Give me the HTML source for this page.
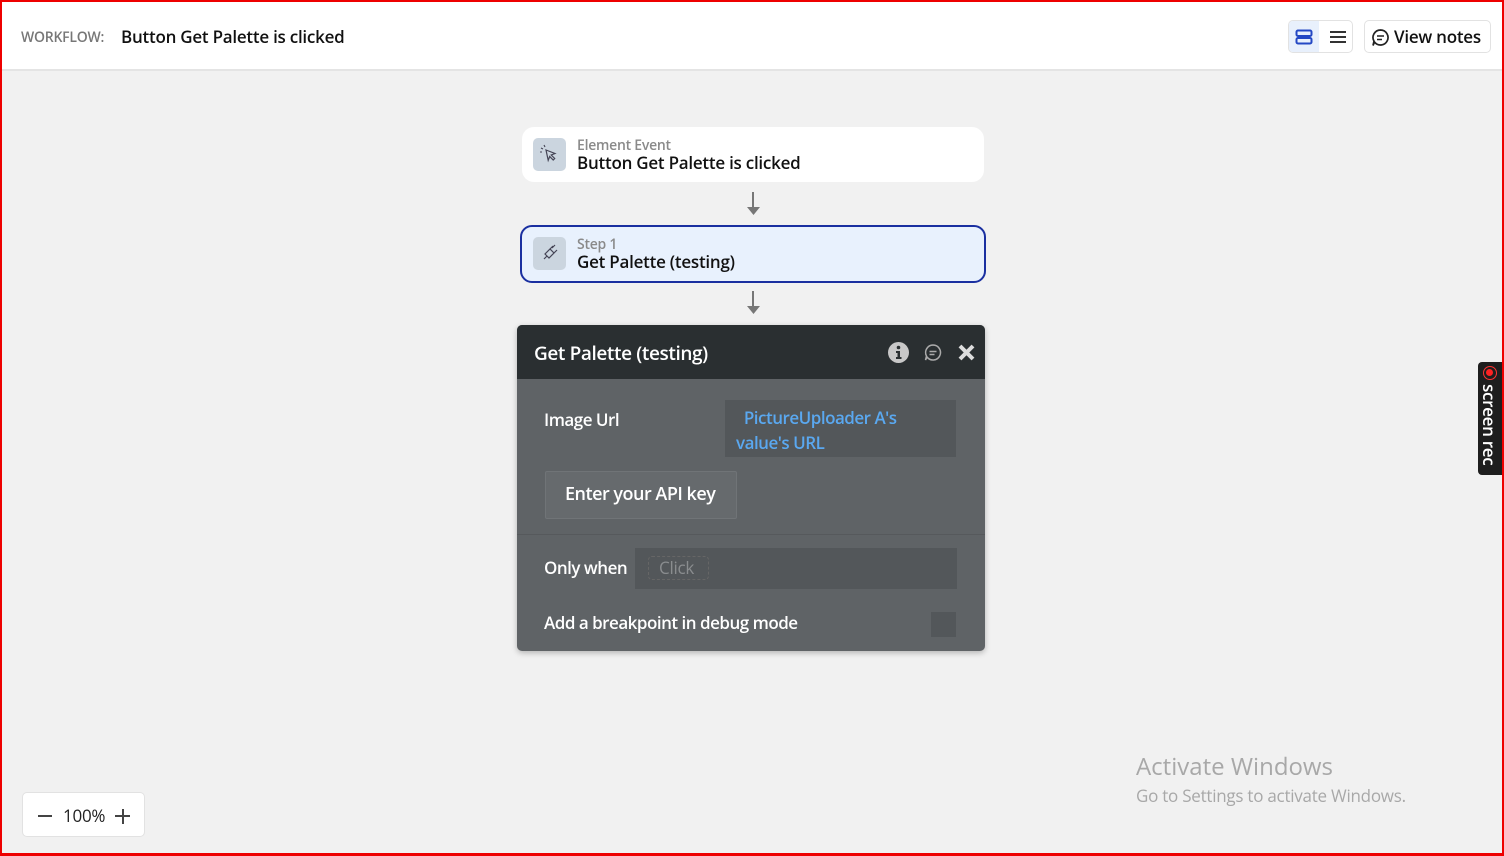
<!DOCTYPE html>
<html><head><style>
*{box-sizing:border-box;margin:0;padding:0}
body{width:1504px;height:856px;overflow:hidden;background:#f1f1f1;font-family:"Open Sans","Liberation Sans",sans-serif;position:relative;letter-spacing:-0.25px}
.frame{position:absolute;inset:0;border:2px solid #e00;border-bottom-width:3px;pointer-events:none;z-index:10}
.top{position:absolute;left:0;top:0;width:1504px;height:71px;background:#fff;border-bottom:2px solid #e4e4e4}
.abs{position:absolute;white-space:nowrap}
.card{position:absolute;left:522px;width:462px;background:#fff;border-radius:12px}
.ic{position:absolute;left:11px;top:11px;width:33px;height:33px;background:#cbd5df;border-radius:5px}
.small{position:absolute;left:55px;font-size:14px;color:#8a8a8a;font-weight:600}
.big{position:absolute;left:55px;font-size:17px;color:#111;font-weight:600}
.arrow{position:absolute;left:752px;width:2px;background:#777}
.panel{position:absolute;left:517px;top:325px;width:468px;height:326px;background:#5f6366;border-radius:5px;box-shadow:0 2px 6px rgba(0,0,0,.25);overflow:hidden}
.ph{height:54px;background:#2a2f31;color:#fff;font-size:19px;padding:15px 17px;font-weight:600;letter-spacing:-0.4px}
.wt{position:absolute;color:#fff;font-size:17px;white-space:nowrap;font-weight:600;letter-spacing:-0.5px}
</style></head><body>
<div class="top">
<div class="abs" style="left:21px;top:28px;font-size:14px;color:#777;font-weight:600">WORKFLOW:</div>
<div class="abs" style="left:121px;top:25px;font-size:17px;color:#111;font-weight:600">Button Get Palette is clicked</div>
<div class="abs" style="left:1288px;top:20px;width:65px;height:33px;border:1px solid #e2e2e2;border-radius:5px;overflow:hidden">
<div class="abs" style="left:0;top:0;width:30px;height:33px;background:#e8f0fc"></div>
<svg class="abs" style="left:6px;top:8px" width="18" height="16"><rect x="1.5" y="1.5" width="15" height="5.5" rx="1.5" fill="none" stroke="#2448c4" stroke-width="2"/><rect x="1.5" y="9" width="15" height="5.5" rx="1.5" fill="none" stroke="#2448c4" stroke-width="2"/></svg>
<svg class="abs" style="left:40px;top:9px" width="18" height="14"><path d="M1 2h16M1 7h16M1 12h16" stroke="#333" stroke-width="2"/></svg>
</div>
<div class="abs" style="left:1364px;top:20px;width:127px;height:33px;border:1px solid #e2e2e2;border-radius:5px">
<svg class="abs" style="left:6px;top:7px" width="19" height="19"><path d="M9.5 2a7.5 7.5 0 1 1-6 12L2 17.5l1-4.3A7.5 7.5 0 0 1 9.5 2z" fill="none" stroke="#222" stroke-width="1.7"/><path d="M6 8h7M6 11.5h5" stroke="#222" stroke-width="1.5"/></svg>
<div class="abs" style="left:29px;top:4px;font-size:17px;color:#111;font-weight:600">View notes</div>
</div>
</div>

<div class="card" style="top:127px;height:55px">
<div class="ic"><svg width="33" height="33"><path d="M13 12l9 3.5-3.8 1.5 3.5 3.5-1.5 1.5-3.5-3.5-1.5 3.8z" fill="none" stroke="#445" stroke-width="1.2"/><path d="M10 11l-2-1M12 9l-1-2M9 14H7" stroke="#445" stroke-width="1.1"/></svg></div>
<div class="small" style="top:9px">Element Event</div>
<div class="big" style="top:24px">Button Get Palette is clicked</div>
</div>
<div class="arrow" style="top:192px;height:20px"></div>
<svg class="abs" style="left:747px;top:207px" width="13" height="9"><path d="M0 0h13L6.5 8z" fill="#777"/></svg>

<div class="card" style="top:225px;height:58px;left:520px;width:466px;background:#e8f1fd;border:2px solid #1a2fa0">
<div class="ic" style="left:11px;top:10px"><svg width="33" height="33"><path d="M11 22l3-3M19 11l3-3M14 19l-2-2 5-5 4 4-5 5z M17 12l3-3M21 16l3-3" fill="none" stroke="#445" stroke-width="1.2"/></svg></div>
<div class="small" style="top:8px">Step 1</div>
<div class="big" style="top:23px">Get Palette (testing)</div>
</div>
<div class="arrow" style="top:291px;height:20px"></div>
<svg class="abs" style="left:747px;top:306px" width="13" height="9"><path d="M0 0h13L6.5 8z" fill="#777"/></svg>

<div class="panel">
<div class="ph">Get Palette (testing)</div>
<svg class="abs" style="left:371px;top:17px" width="21" height="21"><circle cx="10.5" cy="10.5" r="10.5" fill="#c8c8c8"/><circle cx="10.5" cy="5.5" r="1.8" fill="#2a2f31"/><path d="M8 9h4v6h1.5v2h-5.5v-2h1.5v-4H8z" fill="#2a2f31"/></svg>
<svg class="abs" style="left:406px;top:18px" width="20" height="19"><path d="M10 2a7.5 7.5 0 1 1-6 12L2.5 17l1-4A7.5 7.5 0 0 1 10 2z" fill="none" stroke="#aaa" stroke-width="1.5"/><path d="M6.5 8.5h7M6.5 11.5h5" stroke="#aaa" stroke-width="1.4"/></svg>
<svg class="abs" style="left:441px;top:19px" width="17" height="17"><path d="M2 2l13 13M15 2L2 15" stroke="#ddd" stroke-width="4"/></svg>
<div class="wt" style="left:27px;top:83px">Image Url</div>
<div class="abs" style="left:208px;top:75px;width:231px;height:57px;background:#53575a;color:#5aa8f0;font-size:17px;line-height:25px;padding:5px 11px 0;white-space:normal;font-weight:600;letter-spacing:-0.5px">&nbsp; PictureUploader A's value's URL</div>
<div class="abs" style="left:28px;top:146px;width:192px;height:48px;background:#666a6d;border:1px solid #707477;border-radius:2px;color:#fff;font-size:18px;padding:10px 0 0 19px;font-weight:600;letter-spacing:-0.5px">Enter your API key</div>
<div class="abs" style="left:0;top:209px;width:468px;height:1px;background:#56595c"></div>
<div class="wt" style="left:27px;top:231px">Only when</div>
<div class="abs" style="left:118px;top:223px;width:322px;height:41px;background:#53575a"></div>
<div class="abs" style="left:131px;top:231px;width:61px;height:24px;border:1px dashed #666;border-radius:4px;color:#8a8d8f;font-size:17px;padding:0 0 0 10px;line-height:22px">Click</div>
<div class="wt" style="left:27px;top:286px">Add a breakpoint in debug mode</div>
<div class="abs" style="left:414px;top:287px;width:25px;height:25px;background:#53575a"></div>
</div>

<div class="abs" style="left:1478px;top:362px;width:24px;height:113px;background:#1e1e1e;border-radius:4px 0 0 4px">
<div class="abs" style="left:5px;top:4px;width:14px;height:14px;border-radius:50%;border:1.5px solid #f33;background:#1e1e1e"><div style="margin:2px;width:7px;height:7px;border-radius:50%;background:#f22"></div></div>
<div class="abs" style="left:2px;top:22px;writing-mode:vertical-rl;color:#fff;font-size:17px;line-height:19px;font-weight:600;letter-spacing:-0.3px">screen rec</div>
</div>

<div class="abs" style="left:1136px;top:750px;font-size:24px;color:#a8a8a8;letter-spacing:0">Activate Windows</div>
<div class="abs" style="left:1136px;top:784px;font-size:17px;color:#a8a8a8">Go to Settings to activate Windows.</div>

<div class="abs" style="left:22px;top:792px;width:123px;height:45px;background:#fff;border:1px solid #e2e2e2;border-radius:5px">
<div class="abs" style="left:15px;top:22px;width:14px;height:2px;background:#444"></div>
<div class="abs" style="left:40px;top:11px;font-size:17px;color:#222">100%</div>
<div class="abs" style="left:92px;top:22px;width:15px;height:2px;background:#444"></div>
<div class="abs" style="left:98.5px;top:15.5px;width:2px;height:15px;background:#444"></div>
</div>
<div class="frame"></div>
</body></html>
